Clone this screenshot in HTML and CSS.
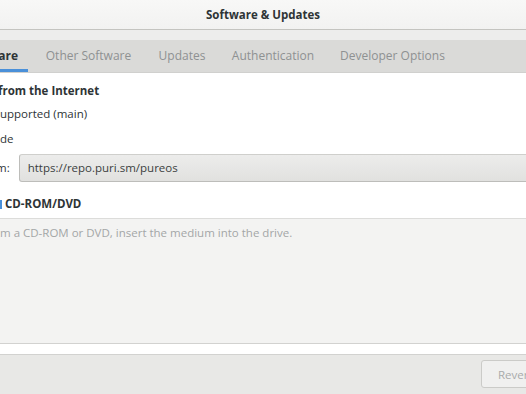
FILE: index.html
```html
<!DOCTYPE html>
<html lang="en">
<head>
    <meta charset="UTF-8">
    <title>Software &amp; Updates</title>
    <link rel="stylesheet" href="styles.css">
</head>
<body>
    <div class="window">
        <header class="titlebar">Software &amp; Updates</header>
        <div class="tabstrip">
            <nav class="tabs">
                <div class="tab first active">PureOS Software</div>
                <div class="tab w-other">Other Software</div>
                <div class="tab w-updates">Updates</div>
                <div class="tab w-auth">Authentication</div>
                <div class="tab w-dev">Developer Options</div>
            </nav>
        </div>

        <section class="page">
            <div class="row heading nudge"><span class="pre">Downloadable </span>from the Internet</div>
            <div class="row item"><span class="pre">Officially s</span>upported (main)</div>
            <div class="row item"><span class="pre">Source co</span>de</div>
            <div class="row source nudge-m">
                <span class="pre">Download fro</span>m:
                <div class="combo">https://repo.puri.sm/pureos</div>
            </div>
            <div class="row heading cd"><span class="pre">Installable from</span><i class="mark"></i>CD-ROM/DVD</div>
        </section>

        <section class="cdrom">
            <div class="row hint"><span class="pre">To install fro</span>m a CD-ROM or DVD, insert the medium into the drive.</div>
        </section>

        <div class="spacer"></div>

        <footer class="actions">
            <button class="btn" disabled>Revert</button>
        </footer>
    </div>
</body>
</html>
```

FILE: styles.css
```css
html, body {
    margin: 0;
    height: 100%;
    overflow: hidden;
}
body {
    font-family: 'Open Sans', 'Noto Sans', sans-serif;
    font-size: 12px;
    color: #2e3436;
    background: #ffffff;
}
.window {
    display: flex;
    flex-direction: column;
    height: 394px;
}
.titlebar {
    height: 29px;
    line-height: 30px;
    font-size: 11.5px;
    text-align: center;
    font-weight: 700;
    background: linear-gradient(#f8f8f7, #f2f2f1);
    border-bottom: 1px solid #c4c4c0;
}
.tabstrip {
    background: #ededec;
    padding-top: 10px;
}
.tabs {
    display: flex;
    height: 32px;
    background: #dadad8;
    border-bottom: 1px solid #d0d0ce;
    color: #8e9192;
    white-space: nowrap;
}
.tab {
    flex: none;
    height: 32px;
    line-height: 32px;
    text-align: center;
    margin-right: 7px;
}
.tab.first {
    width: 180px;
    margin-left: -162px;
    padding-right: 10px;
    text-align: right;
    overflow: hidden;
}
.tab.active {
    color: #2e3436;
    font-weight: 700;
    box-shadow: inset 0 -3px 0 #4a90d9;
}
.w-other { width: 107px; }
.w-updates { width: 66px; }
.w-auth { width: 102px; }
.w-dev { width: 123px; }

.page {
    padding: 10px 0 6px;
    border-bottom: 1px solid #dcdcda;
    font-size: 11.5px;
}
.row {
    display: flex;
    align-items: center;
    white-space: nowrap;
    line-height: 16px;
}
.pre {
    flex: none;
    width: 200px;
    margin-left: -200px;
    text-align: right;
    overflow: hidden;
}
.nudge {
    margin-left: -2px;
}
.nudge-m {
    margin-left: -4px;
}
.heading {
    font-weight: 700;
}
.item {
    margin-top: 7px;
}
.item + .item {
    margin-top: 9px;
}
.source {
    margin-top: 7px;
}
.combo {
    flex: 1;
    height: 26px;
    line-height: 26px;
    margin-left: 9px;
    padding-left: 8px;
    margin-right: -20px;
    border: 1px solid #bdbdba;
    border-top-color: #cfcfcc;
    border-radius: 3px 0 0 3px;
    background: linear-gradient(#ececeb, #e1e1df);
    color: #3b3f40;
}
.cd {
    margin-top: 14px;
}
.mark {
    display: inline-block;
    flex: none;
    width: 2px;
    height: 9px;
    margin-right: 3px;
    background: #4a90d9;
}
.cdrom {
    background: #f3f3f2;
    padding-top: 6px;
    height: 118px;
    border-bottom: 1px solid #d2d2d0;
    font-size: 11.5px;
}
.hint {
    color: #a3a6a7;
}
.spacer {
    height: 10px;
    background: #ffffff;
    border-bottom: 1px solid #d2d2d0;
}
.actions {
    flex: 1;
    display: flex;
    justify-content: flex-end;
    align-items: flex-start;
    padding-top: 5px;
    background: #e8e8e6;
}
.btn {
    font-family: inherit;
    font-size: 11.5px;
    width: 70px;
    height: 28px;
    margin-right: -25px;
    padding: 0 0 0 16px;
    text-align: left;
    color: #a9abab;
    background: #f0f0ef;
    border: 1px solid #cbcbc8;
    border-radius: 3px;
}
```
